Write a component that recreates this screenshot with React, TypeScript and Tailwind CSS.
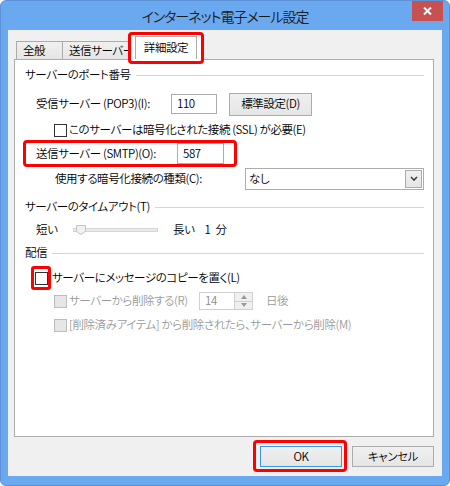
import React from "react";

const font = "font-['Noto_Sans_CJK_JP',sans-serif] [font-feature-settings:'palt']";

function Heading({ label }: { label: string }) {
  return (
    <div className="flex h-[16px] items-center pl-[10px] pr-[9px]">
      <span className="text-black">{label}</span>
      <div className="ml-[5px] h-px flex-1 bg-[#d5d5d5]" />
    </div>
  );
}

function CheckBox({ disabled = false }: { disabled?: boolean }) {
  return (
    <span
      className={
        disabled
          ? "inline-block h-[13px] w-[13px] shrink-0 border border-[#bcbcbc] bg-[#e6e6e6]"
          : "inline-block h-[13px] w-[13px] shrink-0 border border-[#333333] bg-white"
      }
    />
  );
}

function Slider() {
  return (
    <svg width="86" height="12" viewBox="0 0 86 12" className="shrink-0">
      <rect x="0.5" y="4.5" width="84" height="3" fill="#e7eaea" stroke="#d6d6d6" />
      <path d="M3.5 1.5 H12.5 V7.5 L8 10.5 L3.5 7.5 Z" fill="#f0f0f0" stroke="#c4c4c4" />
    </svg>
  );
}

export default function App() {
  return (
    <div
      className={`${font} flex h-[486px] w-[450px] flex-col overflow-hidden rounded-[6px] border border-[#5d93d6] bg-[#6aa8ef] text-black`}
    >
      {/* Title bar */}
      <div className="relative flex h-[29px] shrink-0 items-center justify-center">
        <span className="text-[14px] leading-none tracking-[-1px] text-[#1a1a1a] [font-weight:350]">
          インターネット電子メール設定
        </span>
        <div className="absolute right-[6px] top-0 flex h-[20px] w-[31px] items-center justify-center bg-[#c75050]">
          <svg width="9" height="8" viewBox="0 0 9 8">
            <path d="M1 0.5 L8 7.5 M8 0.5 L1 7.5" stroke="#ffffff" strokeWidth="2" />
          </svg>
        </div>
      </div>

      {/* Client area */}
      <div className="mx-[7px] mb-[9px] flex flex-1 flex-col bg-[#f0f0f0] pl-[6px] pr-[8px] text-[11.5px] leading-none tracking-[-0.4px] [font-weight:350]">
        {/* Tabs */}
        <div className="mt-[6px] flex h-[23px] items-end pl-[2px]">
          <div className="flex h-[18px] w-[47px] items-center border border-b-0 border-[#acacac] bg-gradient-to-b from-[#f0f0f0] to-[#e5e5e5] pl-[6px]">
            全般
          </div>
          <div className="flex h-[18px] w-[72px] items-center overflow-hidden whitespace-nowrap border-t border-[#acacac] bg-gradient-to-b from-[#f0f0f0] to-[#e5e5e5] pl-[6px]">
            送信サーバー
          </div>
          <div className="relative flex h-[23px] w-[62px] items-center justify-center">
            <div className="absolute -left-[7px] -right-[7px] -top-[4px] bottom-[-5px] rounded-[4px] border-[3px] border-[#ff0000] bg-white" />
            <div className="relative flex h-full w-full items-center justify-center border-x border-t border-[#acacac] bg-white">
              詳細設定
            </div>
          </div>
        </div>

        {/* Panel */}
        <div className="flex h-[378px] flex-col border border-[#acacac] bg-white">
          <div className="mt-[7px]">
            <Heading label="サーバーのポート番号" />
          </div>

          {/* POP3 */}
          <div className="mt-[9px] flex h-[24px] items-center pl-[21px]">
            <span className="w-[135px]">受信サーバー (POP3)(I):</span>
            <div className="flex h-[20px] w-[46px] items-center border border-[#acacac] pl-[5px]">110</div>
            <div className="ml-[12px] flex h-[23px] w-[83px] items-center justify-center border border-[#acacac] bg-gradient-to-b from-[#f0f0f0] to-[#e5e5e5]">
              標準設定(D)
            </div>
          </div>

          {/* SSL */}
          <div className="mt-[6px] flex h-[16px] items-center gap-[2px] pl-[39px]">
            <CheckBox />
            <span>このサーバーは暗号化された接続 (SSL) が必要(E)</span>
          </div>

          {/* SMTP */}
          <div className="ml-[8px] mt-[2px] flex h-[27px] w-[214px] items-center rounded-[4px] border-[3px] border-[#ff0000] pl-[10px]">
            <span className="w-[141px]">送信サーバー (SMTP)(O):</span>
            <div className="flex h-[21px] w-[47px] items-center border border-[#acacac] pl-[5px]">587</div>
          </div>

          {/* Encryption */}
          <div className="mt-[1px] flex h-[22px] items-center pl-[40px] pr-[9px]">
            <span className="w-[190px]">使用する暗号化接続の種類(C):</span>
            <div className="flex h-[22px] flex-1 items-center justify-between border border-[#acacac] pl-[3px] pr-[1px]">
              <span>なし</span>
              <div className="flex h-[18px] w-[17px] items-center justify-center border border-[#acacac] bg-gradient-to-b from-[#f0f0f0] to-[#e5e5e5]">
                <svg width="8" height="6" viewBox="0 0 8 6">
                  <path d="M1 1 L4 4 L7 1" fill="none" stroke="#404040" strokeWidth="1.6" />
                </svg>
              </div>
            </div>
          </div>

          <div className="mt-[9px]">
            <Heading label="サーバーのタイムアウト(T)" />
          </div>

          {/* Timeout slider */}
          <div className="mt-[7px] flex h-[16px] items-center pl-[21px]">
            <span className="w-[37px]">短い</span>
            <Slider />
            <span className="ml-[14px]">長い</span>
            <span className="ml-[10px] tracking-[1px]">1 分</span>
          </div>

          <div className="mt-[7px]">
            <Heading label="配信" />
          </div>

          {/* Leave copy */}
          <div className="mt-[5px] flex h-[24px] items-center pl-[16px]">
            <div className="flex h-[24px] w-[20px] items-center justify-center rounded-[3px] border-[3px] border-[#ff0000]">
              <CheckBox />
            </div>
            <span className="ml-[1px]">サーバーにメッセージのコピーを置く(L)</span>
          </div>

          {/* Remove after */}
          <div className="mt-[2px] flex h-[18px] items-center pl-[39px] text-[#9a9a9a]">
            <CheckBox disabled />
            <span className="ml-[2px] w-[130px]">サーバーから削除する(R)</span>
            <div className="flex h-[18px] w-[54px] items-center border border-[#d0d0d0]">
              <span className="flex-1 pl-[5px] text-[#8a8a8a]">14</span>
              <div className="flex h-full w-[18px] flex-col border-l border-[#d0d0d0] bg-[#f0f0f0]">
                <div className="flex flex-1 items-center justify-center border-b border-[#d0d0d0]">
                  <svg width="6" height="4" viewBox="0 0 6 4">
                    <path d="M0 4 L3 0 L6 4 Z" fill="#9a9a9a" />
                  </svg>
                </div>
                <div className="flex flex-1 items-center justify-center">
                  <svg width="6" height="4" viewBox="0 0 6 4">
                    <path d="M0 0 L3 4 L6 0 Z" fill="#9a9a9a" />
                  </svg>
                </div>
              </div>
            </div>
            <span className="ml-[13px]">日後</span>
          </div>

          {/* Remove when deleted */}
          <div className="mt-[7px] flex h-[16px] items-center gap-[2px] pl-[39px] text-[#9a9a9a]">
            <CheckBox disabled />
            <span>[削除済みアイテム] から削除されたら、サーバーから削除(M)</span>
          </div>
        </div>

        {/* Buttons */}
        <div className="mt-[9px] flex justify-end gap-[10px]">
          <div className="relative flex h-[21px] w-[82px] items-center justify-center border border-[#3c97e8] bg-gradient-to-b from-[#f0f0f0] to-[#e5e5e5]">
            OK
            <div className="absolute -left-[8px] -right-[6px] -top-[7px] -bottom-[6px] rounded-[4px] border-[3px] border-[#ff0000]" />
          </div>
          <div className="flex h-[21px] w-[82px] items-center justify-center border border-[#acacac] bg-gradient-to-b from-[#f0f0f0] to-[#e5e5e5]">
            キャンセル
          </div>
        </div>
      </div>
    </div>
  );
}
